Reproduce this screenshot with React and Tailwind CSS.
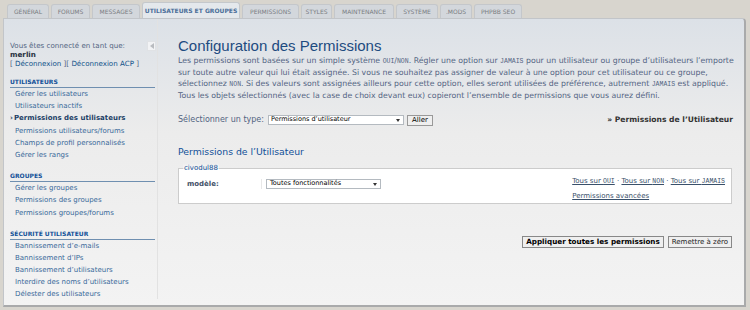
const TABS = [
  { label: 'Général', w: 'w-[42px]' },
  { label: 'Forums', w: 'w-[39px]' },
  { label: 'Messages', w: 'w-[48px]' },
  { label: 'Utilisateurs et groupes', w: 'w-[98px]', active: true },
  { label: 'Permissions', w: 'w-[57px]' },
  { label: 'Styles', w: 'w-[31px]' },
  { label: 'Maintenance', w: 'w-[60px]' },
  { label: 'Système', w: 'w-[42px]' },
  { label: '.Mods', w: 'w-[32px]' },
  { label: 'phpBB SEO', w: 'w-[48px]' },
]

const MENU = [
  {
    title: 'Utilisateurs',
    items: [
      'Gérer les utilisateurs',
      'Utilisateurs inactifs',
      'Permissions des utilisateurs',
      'Permissions utilisateurs/forums',
      'Champs de profil personnalisés',
      'Gérer les rangs',
    ],
  },
  {
    title: 'Groupes',
    items: ['Gérer les groupes', 'Permissions des groupes', 'Permissions groupes/forums'],
  },
  {
    title: 'Sécurité utilisateur',
    items: [
      'Bannissement d’e-mails',
      'Bannissement d’IPs',
      'Bannissement d’utilisateurs',
      'Interdire des noms d’utilisateurs',
      'Délester des utilisateurs',
    ],
  },
]

const FONT = "font-['DejaVu_Sans',Verdana,sans-serif]"

function Caps({ children }) {
  return <span className="font-['Liberation_Mono',monospace] text-[6.5px] uppercase">{children}</span>
}

function Tab({ label, w, active }) {
  return (
    <div
      className={`${w} flex items-center justify-center whitespace-nowrap rounded-t-[3px] border border-b-0 text-[6px] uppercase ${
        active
          ? 'h-[16px] bg-[#e4e8ec] border-[#c4c8cc] text-[#4a6e99] font-bold'
          : 'h-[14px] bg-[#d3d7dc] border-[#c4c7cb] text-[#7a7d82]'
      }`}
    >
      {label}
    </div>
  )
}

function MenuBlock({ title, items }) {
  return (
    <div className="mb-[11px]">
      <div className="text-[6px] leading-[8px] font-bold uppercase text-[#115098] border-b border-[#6f8fb0] pb-[1px]">
        {title}
      </div>
      {items.map((it) => {
        const active = it === 'Permissions des utilisateurs'
        return (
          <div
            key={it}
            className={`h-[12.2px] leading-[12.2px] text-[7px] whitespace-nowrap ${
              active ? 'font-bold text-[#1d3f66]' : 'pl-[5px] text-[#39699a]'
            }`}
          >
            {active && <span className="text-[7px] mr-[1px]">›</span>}
            {it}
          </div>
        )
      })}
    </div>
  )
}

export default function App() {
  return (
    <div className={`w-[750px] h-[310px] bg-[#d8d5ce] pt-[2px] px-[3px] overflow-hidden ${FONT}`}>
      {/* Tabs */}
      <div className="flex items-end gap-[2px] pl-[4px] h-[16px]">
        {TABS.map((t) => (
          <Tab key={t.label} {...t} />
        ))}
      </div>

      {/* Panel */}
      <div className="h-[289px] w-[743px] flex rounded-tr-[4px] border border-[#c2c5c9] border-r-[2px] border-r-[#a9aaab] border-b-[2px] border-b-[#a9aaab] bg-gradient-to-b from-[#dce1e7] via-[#ececec] via-40% to-[#f3f3f3]">
        {/* Left menu */}
        <div className="w-[154px] shrink-0 relative pl-[6px] pr-[2px] pt-[22px] border-r border-[#e2e2e2] mb-[6px]">
          <div className="absolute right-[1px] top-[22px] w-[9px] h-[10px] bg-[#f2f3f5] border border-[#e0e2e5] flex items-center justify-center">
            <div className="w-0 h-0 border-y-[3px] border-y-transparent border-r-[4px] border-r-[#b9bcc0]" />
          </div>
          <div className="text-[7.1px] text-[#536482] leading-[9px]">Vous êtes connecté en tant que:</div>
          <div className="text-[7.2px] font-bold text-[#28313f] leading-[9px]">merlin</div>
          <div className="text-[7.1px] text-[#536482] leading-[9px] whitespace-nowrap">
            [ <span className="text-[#105289]">Déconnexion</span> ][{' '}
            <span className="text-[#105289]">Déconnexion ACP</span> ]
          </div>
          <div className="mt-[10px]">
            {MENU.map((m) => (
              <MenuBlock key={m.title} {...m} />
            ))}
          </div>
        </div>

        {/* Main */}
        <div className="flex-1 pl-[20px] pr-[8px] pt-[18px]">
          <h1 className="font-['Liberation_Sans',Arial,sans-serif] text-[15px] leading-[18px] text-[#1d4b80]">
            Configuration des Permissions
          </h1>
          <p className="text-[7.8px] leading-[11px] text-[#536482] whitespace-nowrap">
            Les permissions sont basées sur un simple système <Caps>Oui</Caps>/<Caps>Non</Caps>. Régler une option
            sur <Caps>Jamais</Caps> pour un utilisateur ou groupe d’utilisateurs l’emporte
            <br />
            sur toute autre valeur qui lui était assignée. Si vous ne souhaitez pas assigner de valeur à une option pour
            cet utilisateur ou ce groupe,
            <br />
            sélectionnez <Caps>Non</Caps>. Si des valeurs sont assignées ailleurs pour cette option, elles seront
            utilisées de préférence, autrement <Caps>Jamais</Caps> est appliqué.
            <br />
            Tous les objets sélectionnés (avec la case de choix devant eux) copieront l’ensemble de permissions que vous
            aurez défini.
          </p>

          <div className="flex items-center mt-[13px] pr-[3px]">
            <span className="text-[8px] text-[#536482] mr-[4px]">Sélectionner un type:</span>
            <div className="w-[136px] h-[10px] bg-white border border-[#b4bac0] flex items-center justify-between pl-[2px] pr-[3px]">
              <span className="text-[6.5px] text-black">Permissions d’utilisateur</span>
              <span className="w-0 h-0 border-x-[2.5px] border-x-transparent border-t-[3px] border-t-[#333]" />
            </div>
            <div className="ml-[3px] h-[11px] px-[4px] bg-[#efefef] border border-[#999] text-[7px] leading-[9px] text-black">
              Aller
            </div>
            <span className="ml-auto text-[7.6px] font-bold text-[#333]">» Permissions de l’Utilisateur</span>
          </div>

          <h2 className="mt-[20px] text-[9.3px] leading-[12px] text-[#115098]">Permissions de l’Utilisateur</h2>

          <div className="mt-[10px] mr-[4px] relative bg-white border border-[#ccc] h-[36px] flex items-start pl-[8px] pr-[6px] pt-[5px]">
            <span className="absolute -top-[6px] left-[4px] px-[1px] text-[7px] leading-[10px] text-[#115098] bg-gradient-to-b from-transparent to-white">
              civodul88
            </span>
            <span className="w-[75px] mt-[5px] text-[7px] leading-[10px] font-bold text-[#425067] border-r border-[#e8e8e8]">modèle:</span>
            <div className="ml-[4px] mt-[5px] w-[115px] h-[10px] bg-white border border-[#b4bac0] flex items-center justify-between pl-[3px] pr-[3px]">
              <span className="text-[6.5px] text-black">Toutes fonctionnalités</span>
              <span className="w-0 h-0 border-x-[2.5px] border-x-transparent border-t-[3px] border-t-[#333]" />
            </div>
            <div className="ml-auto text-[7px] leading-[14px] text-[#39506a] whitespace-nowrap">
              <div>
                <span className="underline">Tous sur <Caps>oui</Caps></span> ·{' '}
                <span className="underline">Tous sur <Caps>non</Caps></span> ·{' '}
                <span className="underline">Tous sur <Caps>jamais</Caps></span>
              </div>
              <div className="underline">Permissions avancées</div>
            </div>
          </div>

          <div className="flex justify-end gap-[4px] mt-[32px] mr-[4px]">
            <div className="h-[12px] px-[3px] bg-[#efefef] border border-[#888] text-[7.2px] leading-[10px] font-bold text-black">
              Appliquer toutes les permissions
            </div>
            <div className="h-[12px] px-[3px] bg-[#efefef] border border-[#888] text-[7px] leading-[10px] text-[#222]">
              Remettre à zéro
            </div>
          </div>
        </div>
      </div>
    </div>
  )
}
